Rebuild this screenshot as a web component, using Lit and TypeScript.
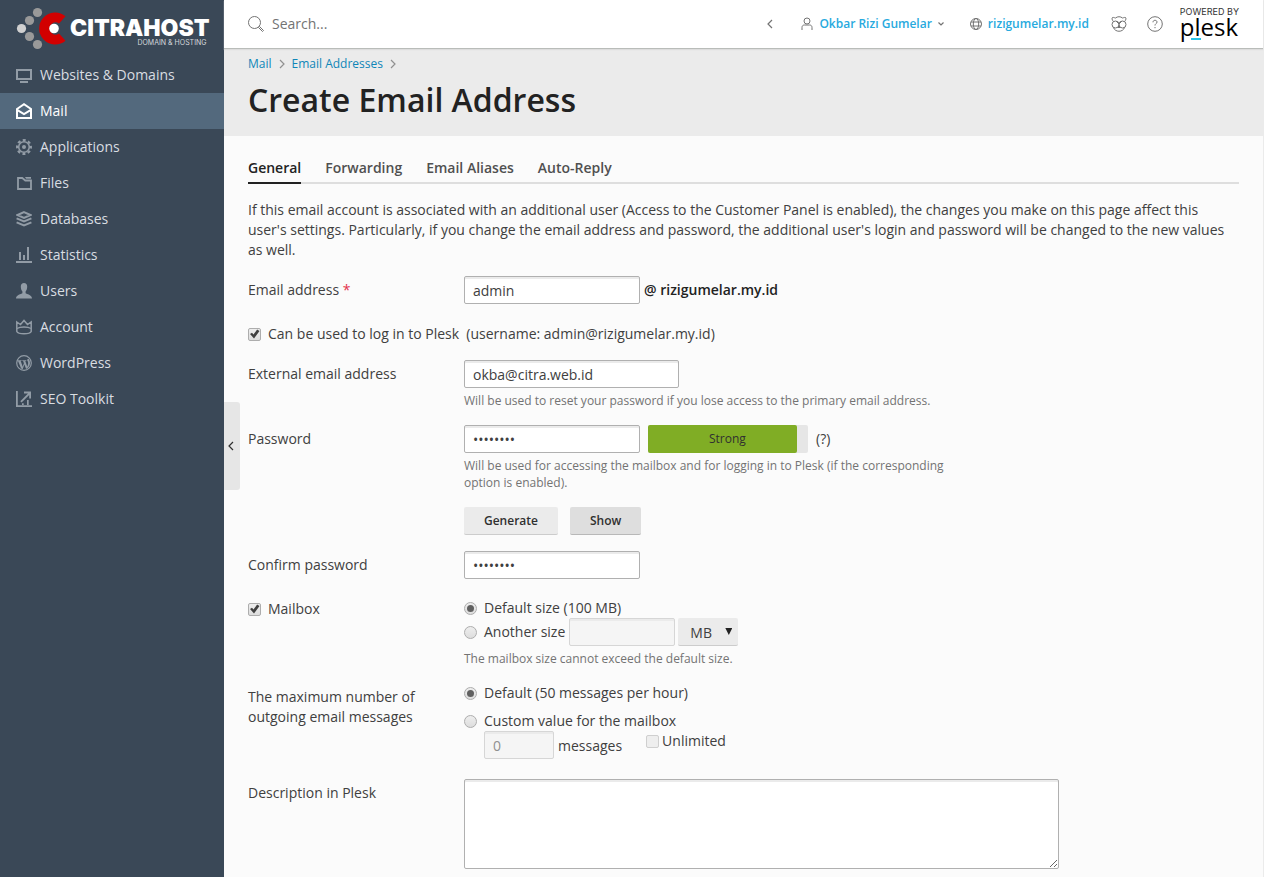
import { LitElement, html, css, svg } from "lit";
import { customElement } from "lit/decorators.js";
import { classMap } from "lit/directives/class-map.js";

const glyphs = {
  monitor: svg`<rect x="1" y="3" width="14" height="9" fill="none" stroke="currentColor" stroke-width="2"/><path d="M4 14h8v2H4z"/>`,
  mail: svg`<path d="M1 6 8 1.200 15 6v9H1z" fill="none" stroke="currentColor" stroke-width="2"/><path d="m1.500 7.200 6.500 4 6.500-4" fill="none" stroke="currentColor" stroke-width="2"/>`,
  gear: svg`<circle cx="8" cy="8" r="5.300" fill="none" stroke="currentColor" stroke-width="1.600"/><circle cx="8" cy="8" r="6.900" fill="none" stroke="currentColor" stroke-width="2.200" stroke-dasharray="3 2.420" stroke-dashoffset="1.500"/><circle cx="8" cy="8" r="2"/>`,
  folder: svg`<path d="M2 3h4.300l3 2.500H15V14H2z" fill="none" stroke="currentColor" stroke-width="1.800"/><path d="M9 2h6v1.700h-5z"/>`,
  layers: svg`<path d="M8 1.200 14.500 4 8 6.800 1.500 4z" fill="none" stroke="currentColor" stroke-width="2"/><path d="m.6 7.400 7.400 3.100 7.400-3.100M.6 11.400 8 14.500l7.400-3.100" fill="none" stroke="currentColor" stroke-width="2"/>`,
  bars: svg`<path d="M0 14h16v2H0zM3 5h2v8H3zM7 8h2v5H7zM11 0h2v13h-2z"/>`,
  user: svg`<path d="M8 0c2 0 3.200 1.300 3.200 3.600 0 2.200-.6 3.900-1.600 5v1.600c1 1 6.400 1.300 6.400 5.300H0c0-4 5.400-4.300 6.400-5.300V8.600c-1-1.100-1.600-2.800-1.600-5C4.800 1.300 6 0 8 0z"/>`,
  crown: svg`<path d="M.8 3 4.500 5.500 8 1.500l3.500 4L15.200 3v9.500c-1.500 3-12.900 3-14.400 0z" fill="none" stroke="currentColor" stroke-width="1.500"/><path d="M1 9.500c3-2 11-2 14 0" fill="none" stroke="currentColor" stroke-width="1.500"/>`,
  wordpress: svg`<circle cx="8" cy="8" r="7.300" fill="none" stroke="currentColor" stroke-width="1.200"/><path d="M1.700 5.200h3.900v.9h-.9l2 5.600 1.200-3.400-.8-2.200h-.8v-.9h4v.9h-1l2 5.700c1.400-4 .8-4.800.2-5.800-.8-1.400.1-2.400 1.100-2.300 2 2.600 2 6.300-.3 8.900l-2.200 1.500L8.400 9.500l-1.700 4.800-1.600-.7z"/>`,
  seo: svg`<path d="M0 0h1.800v14.200H16V16H0zM8 .5h7v7h-1.800V4L5.600 11.500 4.300 10.200 12 2.400H8zM6 12.200h1.700V14H6zM11 9h1.700v5H11z"/>`,
};

type NavItem = { label: string; icon: keyof typeof glyphs; active?: boolean };

const NAV: NavItem[] = [
  { label: "Websites & Domains", icon: "monitor" },
  { label: "Mail", icon: "mail", active: true },
  { label: "Applications", icon: "gear" },
  { label: "Files", icon: "folder" },
  { label: "Databases", icon: "layers" },
  { label: "Statistics", icon: "bars" },
  { label: "Users", icon: "user" },
  { label: "Account", icon: "crown" },
  { label: "WordPress", icon: "wordpress" },
  { label: "SEO Toolkit", icon: "seo" },
];

const TABS = ["General", "Forwarding", "Email Aliases", "Auto-Reply"];

@customElement("side-nav")
class SideNav extends LitElement {
  static styles = css`
    :host { display: block; background: #3a4857; }
    .logo { display: flex; align-items: flex-start; gap: 4px; height: 57px; padding-left: 16px; box-sizing: border-box; text-decoration: none; color: #fff; }
    .mark { width: 50px; height: 46px; padding-top: 4px; flex: none; }
    .words { display: flex; flex-direction: column; align-items: flex-end; padding-top: 18px; }
    .brand { font: 900 23px/21px Inter, sans-serif; }
    .sub { font: 7px/8px Inter, sans-serif; color: #d5d8dc; padding-right: 3px; }
    .item { display: flex; align-items: center; gap: 8px; height: 36px; padding: 0 16px; color: #d9dde1; text-decoration: none; font-size: 14px; font-weight: 500; }
    .icon { width: 16px; height: 16px; fill: currentColor; color: #929ca6; flex: none; }
    .item.active { background: #53697d; color: #fff; }
    .active .icon { color: #fff; }
  `;
  render() {
    return html`
      <a class="logo" href="#">
        <svg class="mark" viewBox="0 0 50 46">
          <circle cx="5.500" cy="24.500" r="4.600" fill="#d0d0d0"/>
          <g fill="#999"><circle cx="13.500" cy="16.500" r="4.600"/><circle cx="21.500" cy="8.500" r="4.600"/><circle cx="13.500" cy="32.500" r="4.600"/><circle cx="21.500" cy="40.500" r="4.600"/></g>
          <path d="M49.500 12.300A16 16 0 1 0 49.500 36.700L43 29.500A6 6 0 1 1 43 19.500z" fill="#d20000"/>
          <circle cx="38" cy="24.500" r="4.800" fill="#fff"/>
        </svg>
        <span class="words"><span class="brand">CITRAHOST</span><span class="sub">DOMAIN &amp; HOSTING</span></span>
      </a>
      <nav>
        ${NAV.map((n) => html`<a href="#" class=${classMap({ item: true, active: !!n.active })}>
          <svg class="icon" viewBox="0 0 16 16">${glyphs[n.icon]}</svg>${n.label}</a>`)}
      </nav>`;
  }
}

@customElement("top-bar")
class TopBar extends LitElement {
  static styles = css`
    :host { display: flex; align-items: center; height: 49px; padding: 0 24px; background: #fff; border-bottom: 1px solid #b9bcb9; box-shadow: 0 1px 1px #ddd; box-sizing: border-box; position: relative; }
    svg { fill: none; stroke: #737373; flex: none; display: block; }
    .search { display: flex; align-items: center; gap: 8px; flex: 1; }
    .search input { border: 0; outline: 0; padding: 0; flex: 1; background: none; font: 14px/20px "Open Sans", sans-serif; color: #222; }
    .search input::placeholder { color: #737373; opacity: 1; }
    .tools { display: flex; align-items: center; }
    a { color: #28aade; font-weight: 600; font-size: 12px; text-decoration: none; display: flex; align-items: center; gap: 6px; }
    button { border: 0; padding: 0; background: none; display: block; }
    .prev { margin-right: 27px; }
    .domain { margin: 0 22px 0 26px; }
    .help { margin: 0 17px 0 20px; }
    .plesk { display: flex; flex-direction: column; align-items: flex-start; gap: 0; color: #000; font-weight: 400; padding-bottom: 2px; }
    .powered { font: 9px/9px Inter, sans-serif; color: #333; }
    .name { font: 24px/22px "Open Sans", sans-serif; }
    .dash { width: 10px; height: 2px; background: #28c3e8; margin-left: 11px; }
  `;
  render() {
    return html`
      <label class="search">
        <svg width="16" height="16" viewBox="0 0 16 16"><circle cx="6.500" cy="6.500" r="6"/><path d="m10.500 11.500 1-1 4 4-1 1z"/></svg>
        <input type="search" placeholder="Search..." aria-label="Search">
      </label>
      <div class="tools">
        <button class="prev" aria-label="Back"><svg width="8" height="10" viewBox="0 0 8 10"><path d="M6 1 2 5l4 4" stroke-width="1.200"/></svg></button>
        <a href="#"><svg width="12" height="14" viewBox="0 0 12 14"><circle cx="6" cy="4" r="3"/><path d="M1 13v-2.500C1 8.800 2 8 3.500 8h5c1.500 0 2.500.8 2.500 2.500V13"/></svg>Okbar Rizi Gumelar<svg width="6" height="6" viewBox="0 0 6 6"><path d="m.5 1.500 2.500 2.500 2.500-2.500" stroke-width="1.200"/></svg></a>
        <a class="domain" href="#"><svg width="12" height="12" viewBox="0 0 12 12"><circle cx="6" cy="6" r="5.500"/><ellipse cx="6" cy="6" rx="2.700" ry="5.500"/><path d="M1 4h10M1 8h10"/></svg>rizigumelar.my.id</a>
        <button aria-label="Advisor"><svg width="16" height="16" viewBox="0 0 16 16"><circle cx="4.500" cy="8.500" r="3.500"/><circle cx="11.500" cy="8.500" r="3.500"/><path d="M2.500 5.500C.8 4 .8 2 1.500 1.500c1.500-.3 2 .4 3 .5 2-1.700 5-1.700 7 0 1-.1 1.500-.8 3-.5.7.5.7 2.500-1 4M5 5l3 3 3-3M2.500 11.500c1.500 5 9.500 5 11 0M7 11l1-1 1 1-1 1z"/></svg></button>
        <button class="help" aria-label="Help"><svg width="16" height="16" viewBox="0 0 16 16"><circle cx="8" cy="8" r="7.300"/><path d="M6 6.300C6 5 6.800 4.300 8 4.300s2 .7 2 1.800C10 7.500 8 7.600 8 9.500M8 11v1.200"/></svg></button>
        <a class="plesk" href="#"><span class="powered">POWERED BY</span><span class="name">plesk</span><span class="dash"></span></a>
      </div>`;
  }
}

@customElement("mail-form")
class MailForm extends LitElement {
  static styles = css`
    :host { display: block; }
    form { display: flex; flex-direction: column; gap: 16px; }
    .row { display: grid; grid-template-columns: 200px minmax(0, 1fr); column-gap: 16px; align-items: start; }
    .caption { padding-top: 4px; }
    .req { color: #e3324d; }
    .line { display: flex; align-items: center; }
    .check { display: flex; align-items: center; gap: 7px; padding-top: 4px; }
    input, select, textarea, button { font: 14px/20px "Open Sans", sans-serif; color: #404040; box-sizing: border-box; margin: 0; }
    .text, .area { background: #fff; border: 1px solid #b0b0b0; border-radius: 2px; box-shadow: inset 0 2px 0 #ebebeb; outline: 0; display: block; }
    .text { height: 28px; width: 176px; padding: 2px 8px; }
    .text.wide { width: 215px; }
    .text:disabled { background: #f5f5f5; border-color: #d6d6d6; color: #909090; }
    .text.size { width: 106px; margin-left: 4px; }
    .text.count { width: 70px; }
    .area { width: 100%; max-width: 595px; height: 90px; resize: both; }
    .domain { font-weight: 600; margin-left: 4px; color: #222; }
    .hint { font-size: 12px; line-height: 17px; color: #737373; margin-top: 4px; max-width: 500px; }
    .box, .radio { appearance: none; width: 13px; height: 13px; border: 1px solid #adadad; background: linear-gradient(#eee, #ddd); display: grid; place-items: center; flex: none; }
    .box { border-radius: 2px; }
    .box:disabled { border-color: #cfcfcf; background: #eee; }
    .box:checked::after { content: ""; width: 10px; height: 10px; background: #404040; clip-path: polygon(5% 50%, 25% 38%, 40% 56%, 76% 5%, 100% 20%, 45% 96%); }
    .radio { border-radius: 50%; }
    .radio:checked::after { content: ""; width: 7px; height: 7px; border-radius: 50%; background: #606060; }
    .opt { display: flex; align-items: center; gap: 7px; }
    .meter { display: flex; width: 160px; height: 28px; margin: 0 8px; background: #e6e6e6; border-radius: 2px; }
    .fill { background: #80ad25; border-radius: 2px; color: #303030; font-size: 12px; line-height: 28px; padding-left: 10px; box-sizing: border-box; text-align: center; }
    .buttons { display: flex; gap: 12px; margin-top: 16px; }
    .btn { height: 28px; border: 0; border-bottom: 1px solid #ccc; border-radius: 2px; background: #ebebeb; padding: 0 20px; font-size: 12px; font-weight: 600; color: #303030; }
    .btn.dark { background: #dedede; border-bottom-color: #b8b8b8; }
    .sizes { padding-top: 3px; }
    .picker { position: relative; margin-left: 3px; }
    .picker select { appearance: none; height: 28px; width: 60px; border: 0; border-bottom: 1px solid #ccc; border-radius: 2px; background: #ebebeb; padding: 2px 0 0 12px; display: block; }
    .arrow { position: absolute; right: 6px; top: 10px; width: 7px; height: 7px; background: #222; clip-path: polygon(0 0, 100% 0, 50% 100%); pointer-events: none; }
    .custom { margin-top: 8px; }
    .limit { padding: 0 0 4px 20px; align-items: flex-start; }
    .unit { padding: 5px 24px 0 4px; }
    .unlim { display: flex; align-items: center; gap: 3px; }
  `;
  render() {
    return html`<form @submit=${(e: Event) => e.preventDefault()}>
      <div class="row">
        <label class="caption" for="email">Email address <span class="req">*</span></label>
        <div class="line"><input class="text" id="email" value="admin"><span class="domain">@ rizigumelar.my.id</span></div>
      </div>
      <label class="check"><input class="box" type="checkbox" checked><span>Can be used to log in to Plesk &nbsp;(username: admin@rizigumelar.my.id)</span></label>
      <div class="row">
        <label class="caption" for="ext">External email address</label>
        <div><input class="text wide" id="ext" value="okba@citra.web.id">
          <div class="hint">Will be used to reset your password if you lose access to the primary email address.</div></div>
      </div>
      <div class="row">
        <label class="caption" for="pw">Password</label>
        <div>
          <div class="line"><input class="text" id="pw" type="password" value="password">
            <div class="meter"><div class="fill" style="width:93%">Strong</div></div><span>(?)</span></div>
          <div class="hint">Will be used for accessing the mailbox and for logging in to Plesk (if the corresponding option is enabled).</div>
          <div class="buttons"><button class="btn" type="button">Generate</button><button class="btn dark" type="button">Show</button></div>
        </div>
      </div>
      <div class="row">
        <label class="caption" for="pw2">Confirm password</label>
        <input class="text" id="pw2" type="password" value="password">
      </div>
      <div class="row">
        <label class="check"><input class="box" type="checkbox" checked>Mailbox</label>
        <div class="sizes">
          <label class="opt"><input class="radio" type="radio" name="size" checked>Default size (100 MB)</label>
          <div class="line">
            <label class="opt"><input class="radio" type="radio" name="size">Another size</label>
            <input class="text size" aria-label="Mailbox size" disabled>
            <span class="picker"><select aria-label="Size unit"><option>MB</option><option>GB</option></select><span class="arrow"></span></span>
          </div>
          <div class="hint">The mailbox size cannot exceed the default size.</div>
        </div>
      </div>
      <div class="row">
        <div class="caption">The maximum number of outgoing email messages</div>
        <div>
          <label class="opt"><input class="radio" type="radio" name="max" checked>Default (50 messages per hour)</label>
          <label class="opt custom"><input class="radio" type="radio" name="max">Custom value for the mailbox</label>
          <div class="line limit"><input class="text count" aria-label="Messages" value="0" disabled><span class="unit">messages</span>
            <label class="unlim"><input class="box" type="checkbox" disabled>Unlimited</label></div>
        </div>
      </div>
      <div class="row">
        <label class="caption" for="desc">Description in Plesk</label>
        <textarea class="area" id="desc"></textarea>
      </div>
    </form>`;
  }
}

@customElement("app-root")
class AppRoot extends LitElement {
  static styles = css`
    :host { display: grid; grid-template-columns: 224px minmax(0, 1fr); min-height: 100vh; font: 14px/20px "Open Sans", sans-serif; color: #404040; background: #fbfbfb; }
    main { position: relative; border-right: 1px solid #ebebeb; }
    .head { background: #ebebeb; padding: 5px 24px 14px; }
    .crumbs { display: flex; align-items: center; gap: 7px; font-size: 12px; line-height: 20px; }
    .crumbs a { color: #0f86b8; text-decoration: none; }
    .crumbs svg { width: 6px; height: 10px; fill: none; stroke: #909090; stroke-width: 1.2; }
    h1 { margin: 4px 0 0; font-size: 32px; line-height: 44px; font-weight: 600; color: #222; }
    .body { padding: 22px 24px 8px; }
    .tabs { display: flex; gap: 24px; border-bottom: 2px solid #dedede; }
    .tab { color: #505050; font-weight: 600; text-decoration: none; padding-bottom: 4px; border-bottom: 2px solid transparent; margin-bottom: -2px; }
    .tab.active { color: #222; border-bottom-color: #222; }
    p { margin: 16px 0; }
    .collapse { position: absolute; left: 0; top: 402px; width: 16px; height: 88px; border: 0; padding: 0 2px 0 0; background: #e6e6e6; border-radius: 0 3px 3px 0; display: grid; place-items: center; }
    .collapse svg { width: 6px; height: 10px; fill: none; stroke: #303030; stroke-width: 1.2; }
  `;
  render() {
    const sep = html`<svg viewBox="0 0 6 10"><path d="m1 1 4 4-4 4"/></svg>`;
    return html`
      <side-nav></side-nav>
      <main>
        <top-bar></top-bar>
        <div class="head">
          <div class="crumbs"><a href="#">Mail</a>${sep}<a href="#">Email Addresses</a>${sep}</div>
          <h1>Create Email Address</h1>
        </div>
        <div class="body">
          <nav class="tabs">${TABS.map((t, i) => html`<a href="#" class=${classMap({ tab: true, active: i === 0 })}>${t}</a>`)}</nav>
          <p>If this email account is associated with an additional user (Access to the Customer Panel is enabled), the changes you make on this page affect this user's settings. Particularly, if you change the email address and password, the additional user's login and password will be changed to the new values as well.</p>
          <mail-form></mail-form>
        </div>
        <button class="collapse" aria-label="Collapse menu"><svg viewBox="0 0 6 10"><path d="M5 1 1 5l4 4"/></svg></button>
      </main>`;
  }
}
